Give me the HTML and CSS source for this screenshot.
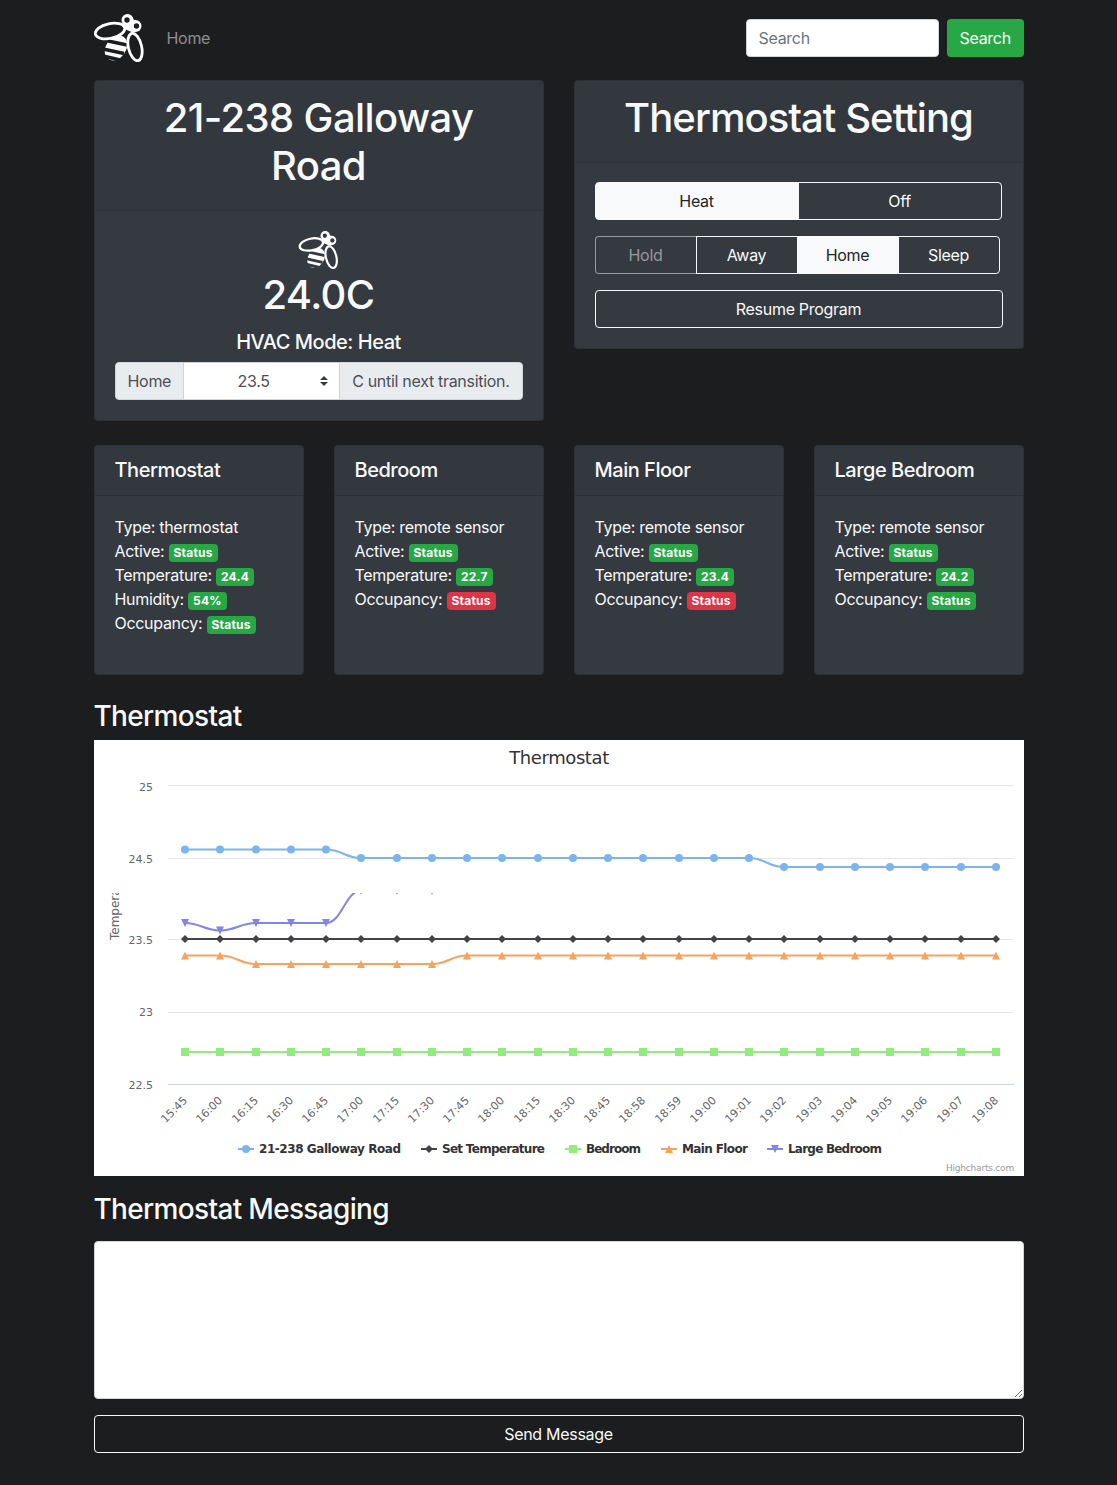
FILE: index.html
```html
<!DOCTYPE html>
<html lang="en">
<head>
    <meta charset="UTF-8">
    <meta name="viewport" content="width=device-width, initial-scale=1.0">
    <title>Thermostat</title>
    <link rel="stylesheet" href="styles.css">
</head>
<body>
    <!-- Bee logo, reused in the nav and the thermostat card -->
    <svg class="sprite" width="0" height="0">
        <symbol id="bee" viewBox="0 0 50 48">
            <circle cx="33.5" cy="6" r="6" fill="#fff"/>
            <circle cx="41.5" cy="12" r="6" fill="#fff"/>
            <path d="M33 2 L46 9 L40 19 L28 14 Z" fill="#fff"/>
            <circle cx="33" cy="6" r="2.7" fill="var(--bee-bg)"/>
            <circle cx="42.5" cy="12" r="2.7" fill="var(--bee-bg)"/>
            <ellipse cx="22" cy="34" rx="10" ry="13.5" transform="rotate(35 22 34)" fill="#fff"/>
            <path d="M14 27 L33 31 M9 35 L30 39.5 M9 42 L26 46" stroke="var(--bee-bg)" stroke-width="3.6" fill="none"/>
            <ellipse cx="16" cy="17" rx="15" ry="7.4" transform="rotate(-12 16 17)" fill="var(--bee-bg)" stroke="#fff" stroke-width="2.8"/>
            <ellipse cx="41" cy="33" rx="6.6" ry="14" transform="rotate(-13 41 33)" fill="var(--bee-bg)" stroke="#fff" stroke-width="2.8"/>
        </symbol>
    </svg>

    <div class="container">
        <nav class="navbar">
            <svg class="logo"><use href="#bee"/></svg>
            <a href="#" class="nav-link">Home</a>
            <form class="search-form">
                <input type="text" class="form-control search-input" placeholder="Search">
                <button type="button" class="btn btn-search">Search</button>
            </form>
        </nav>

        <div class="top-row">
            <section class="card">
                <div class="card-header">
                    <h1 class="address">21-238 Galloway<br>Road</h1>
                </div>
                <div class="card-body center">
                    <svg class="logo-small"><use href="#bee"/></svg>
                    <h1 class="current-temp">24.0C</h1>
                    <h5 class="hvac-mode">HVAC Mode: Heat</h5>
                    <div class="input-group">
                        <span class="input-text">Home</span>
                        <div class="select-wrap">
                            <select class="temp-select">
                                <option>23.5</option>
                                <option>24.0</option>
                            </select>
                            <span class="arrow-up"></span>
                            <span class="arrow-down"></span>
                        </div>
                        <span class="input-text input-text-end">C until next transition.</span>
                    </div>
                </div>
            </section>

            <section class="card card-short">
                <div class="card-header">
                    <h1>Thermostat Setting</h1>
                </div>
                <div class="card-body">
                    <div class="btn-group mode-group">
                        <button class="btn btn-outline active">Heat</button>
                        <button class="btn btn-outline">Off</button>
                    </div>
                    <div class="btn-group preset-group">
                        <button class="btn btn-outline disabled">Hold</button>
                        <button class="btn btn-outline">Away</button>
                        <button class="btn btn-outline active">Home</button>
                        <button class="btn btn-outline">Sleep</button>
                    </div>
                    <button class="btn btn-outline btn-block">Resume Program</button>
                </div>
            </section>
        </div>

        <div class="sensor-row">
            <section class="card sensor">
                <div class="card-header"><h5>Thermostat</h5></div>
                <div class="card-body">
                    <p>Type: thermostat</p>
                    <p>Active: <span class="badge">Status</span></p>
                    <p>Temperature: <span class="badge">24.4</span></p>
                    <p>Humidity: <span class="badge">54%</span></p>
                    <p>Occupancy: <span class="badge">Status</span></p>
                </div>
            </section>
            <section class="card sensor">
                <div class="card-header"><h5>Bedroom</h5></div>
                <div class="card-body">
                    <p>Type: remote sensor</p>
                    <p>Active: <span class="badge">Status</span></p>
                    <p>Temperature: <span class="badge">22.7</span></p>
                    <p>Occupancy: <span class="badge badge-danger">Status</span></p>
                </div>
            </section>
            <section class="card sensor">
                <div class="card-header"><h5>Main Floor</h5></div>
                <div class="card-body">
                    <p>Type: remote sensor</p>
                    <p>Active: <span class="badge">Status</span></p>
                    <p>Temperature: <span class="badge">23.4</span></p>
                    <p>Occupancy: <span class="badge badge-danger">Status</span></p>
                </div>
            </section>
            <section class="card sensor">
                <div class="card-header"><h5>Large Bedroom</h5></div>
                <div class="card-body">
                    <p>Type: remote sensor</p>
                    <p>Active: <span class="badge">Status</span></p>
                    <p>Temperature: <span class="badge">24.2</span></p>
                    <p>Occupancy: <span class="badge">Status</span></p>
                </div>
            </section>
        </div>

        <h3 class="chart-title">Thermostat</h3>
        <div id="chart" class="chart"></div>

        <h3 class="messaging-title">Thermostat Messaging</h3>
        <textarea class="form-control message-box" rows="6"></textarea>
        <button class="btn btn-outline btn-block btn-send">Send Message</button>
    </div>

    <script src="chart.js"></script>
</body>
</html>
```

FILE: styles.css
```css
* {
    box-sizing: border-box;
}

body {
    --bee-bg: #1b1d1f;
    margin: 0;
    background-color: #1b1d1f;
    color: #f8f9fa;
    font-family: Inter, "Liberation Sans", Arial, sans-serif;
    font-size: 16px;
    line-height: 24px;
    letter-spacing: -0.3px;
}

.sprite {
    position: absolute;
}

.container {
    max-width: 960px;
    margin: auto;
    padding: 0 15px 32px;
}

h1, h3, h5 {
    margin: 0;
    font-weight: 500;
    letter-spacing: -0.024em;
}

/* Navbar */
.navbar {
    display: flex;
    align-items: center;
    height: 76px;
    margin-bottom: 4px;
}

.logo {
    width: 50px;
    height: 48px;
}

.nav-link {
    margin-left: 23px;
    color: rgba(255, 255, 255, 0.5);
    text-decoration: none;
}

.search-form {
    display: flex;
    gap: 8px;
    margin-left: auto;
}

.search-input {
    width: 193px;
}

.form-control {
    display: block;
    padding: 6px 12px;
    background: white;
    border: 1px solid #ced4da;
    border-radius: 4px;
    color: #495057;
    font: inherit;
    letter-spacing: inherit;
}

.form-control::placeholder {
    color: #6c757d;
}

/* Buttons */
.btn {
    height: 38px;
    padding: 6px 12px;
    border: 1px solid transparent;
    border-radius: 4px;
    background: none;
    color: white;
    font: inherit;
    letter-spacing: inherit;
    cursor: pointer;
}

.btn-search {
    width: 77px;
    background-color: #28a745;
}

.btn-outline {
    border-color: #f8f9fa;
    color: #f8f9fa;
}

.btn-outline.active {
    background-color: #f8f9fa;
    color: #212529;
}

.btn-outline.disabled {
    color: rgba(248, 249, 250, 0.5);
    border-color: rgba(248, 249, 250, 0.5);
    border-right-color: #f8f9fa;
}

.btn-block {
    display: block;
    width: 100%;
}

.btn-group {
    display: flex;
    margin-bottom: 16px;
}

.btn-group .btn {
    flex: 1;
    border-radius: 0;
    margin-left: -1px;
}

.btn-group .btn:first-child {
    margin-left: 0;
    border-radius: 4px 0 0 4px;
}

.btn-group .btn:last-child {
    border-radius: 0 4px 4px 0;
}

.mode-group {
    width: 407px;
}

.preset-group {
    width: 405px;
}

/* Cards */
.card {
    --bee-bg: #343a40;
    background-color: #343a40;
    border: 1px solid rgba(0, 0, 0, 0.125);
    border-radius: 4px;
}

.card-header {
    padding: 13px 20px 12px;
    border-bottom: 1px solid rgba(0, 0, 0, 0.125);
    background-color: rgba(0, 0, 0, 0.03);
    text-align: center;
}

.card-header h1 {
    margin-bottom: 8px;
    font-size: 40px;
    line-height: 48px;
}

.card-header .address {
    letter-spacing: -0.6px;
}

.card-body {
    padding: 19px 20px 20px;
}

.center {
    text-align: center;
}

.top-row {
    display: grid;
    grid-template-columns: 1fr 1fr;
    gap: 30px;
    align-items: start;
}

.logo-small {
    display: block;
    width: 41px;
    height: 38px;
    margin: 1px auto 2px;
}

.current-temp {
    margin-bottom: 11px;
    font-size: 40px;
    line-height: 48px;
    letter-spacing: -0.6px;
}

.hvac-mode {
    margin-bottom: 8px;
    font-size: 20px;
    line-height: 24px;
}

/* Input group in the thermostat card */
.input-group {
    display: flex;
    height: 38px;
    color: #495057;
}

.input-text {
    padding: 6px 12px;
    background-color: #e9ecef;
    border: 1px solid #ced4da;
    border-radius: 4px 0 0 4px;
    white-space: nowrap;
}

.input-text-end {
    border-radius: 0 4px 4px 0;
    margin-left: -1px;
}

.select-wrap {
    position: relative;
    flex: 1;
    margin-left: -1px;
}

.temp-select {
    width: 100%;
    height: 38px;
    padding: 0 16px 0 0;
    appearance: none;
    background: white;
    border: 1px solid #ced4da;
    border-radius: 0;
    color: #495057;
    font: inherit;
    letter-spacing: inherit;
    text-align: center;
}

.arrow-up, .arrow-down {
    position: absolute;
    right: 12px;
    width: 0;
    height: 0;
    border-left: 4px solid transparent;
    border-right: 4px solid transparent;
}

.arrow-up {
    top: 14px;
    border-bottom: 4px solid #343a40;
}

.arrow-down {
    top: 20px;
    border-top: 4px solid #343a40;
}

/* Sensor cards */
.sensor-row {
    display: grid;
    grid-template-columns: repeat(4, 1fr);
    gap: 30px;
    margin-top: 24px;
}

.sensor {
    min-height: 230px;
}

.sensor .card-header {
    padding: 12px 20px 13px;
    text-align: left;
}

.sensor h5 {
    font-size: 20px;
    line-height: 24px;
}

.sensor p {
    margin: 0;
    white-space: nowrap;
}

.badge {
    display: inline-block;
    padding: 3px 5px;
    background-color: #28a745;
    border-radius: 4px;
    color: white;
    font-size: 12px;
    font-weight: 700;
    line-height: 12px;
    letter-spacing: 0.2px;
    vertical-align: baseline;
}

.badge-danger {
    background-color: #dc3545;
}

/* Chart */
.chart-title {
    margin-top: 24px;
    margin-bottom: 7px;
    font-size: 28px;
    line-height: 34px;
}

.chart {
    height: 436px;
    background: white;
    letter-spacing: 0;
}

.chart svg {
    display: block;
    width: 100%;
    height: 100%;
}

.chart text {
    font-family: "DejaVu Sans", Verdana, sans-serif;
}

.chart .chart-name {
    letter-spacing: -0.4px;
}

.chart .credits {
    letter-spacing: -0.2px;
}

.messaging-title {
    margin-top: 16px;
    margin-bottom: 15px;
    font-size: 28px;
    line-height: 34px;
}

.message-box {
    width: 100%;
    height: 158px;
    margin-bottom: 16px;
}
```

FILE: chart.js
```js
// Hand-rolled version of the temperature chart, coordinates relative to the chart box
const categories = ['15:45', '16:00', '16:15', '16:30', '16:45', '17:00', '17:15', '17:30', '17:45',
    '18:00', '18:15', '18:30', '18:45', '18:58', '18:59', '19:00', '19:01', '19:02', '19:03',
    '19:04', '19:05', '19:06', '19:07', '19:08'];

const pointX = categories.map((c, i) => Math.round(91 + 35.26 * i));

function fill(first, rest) {
    return categories.map((c, i) => {
        for (const [until, y] of rest) {
            if (i <= until) return y;
        }
        return first;
    });
}

const series = [
    { name: '21-238 Galloway Road', color: '#7cb5ec', symbol: 'circle', legendX: 144, labelWidth: 142, ys: fill(127, [[4, 109.5], [16, 118]]) },
    { name: 'Set Temperature', color: '#434348', symbol: 'diamond', legendX: 327, labelWidth: 103, ys: fill(199, []) },
    { name: 'Bedroom', color: '#90ed7d', symbol: 'square', legendX: 471, labelWidth: 55, ys: fill(312, []) },
    { name: 'Main Floor', color: '#f7a35c', symbol: 'triangle', legendX: 567, labelWidth: 66, ys: fill(215.5, [[1, 215.5], [7, 224]]) },
    { name: 'Large Bedroom', color: '#8085e9', symbol: 'triangle-down', legendX: 673, labelWidth: 94, ys: [183, 190.5, 183, 183, 183, 150.8, 150.8, 150.8], clip: true }
];

function marker(symbol, x, y, color) {
    if (symbol === 'circle') return `<circle cx="${x}" cy="${y}" r="4" fill="${color}"/>`;
    if (symbol === 'square') return `<rect x="${x - 4}" y="${y - 4}" width="8" height="8" fill="${color}"/>`;
    let points = '';
    if (symbol === 'diamond') points = `${x},${y - 4} ${x + 4},${y} ${x},${y + 4} ${x - 4},${y}`;
    if (symbol === 'triangle') points = `${x},${y - 4} ${x + 4},${y + 4} ${x - 4},${y + 4}`;
    if (symbol === 'triangle-down') points = `${x - 4},${y - 4} ${x + 4},${y - 4} ${x},${y + 4}`;
    return `<polygon points="${points}" fill="${color}"/>`;
}

function linePath(ys) {
    let d = `M${pointX[0]} ${ys[0]}`;
    for (let i = 1; i < ys.length; i++) {
        const x0 = pointX[i - 1];
        const x1 = pointX[i];
        const bend = (x1 - x0) * 0.45;
        d += ` C${x0 + bend} ${ys[i - 1]} ${x1 - bend} ${ys[i]} ${x1} ${ys[i]}`;
    }
    return d;
}

let svg = '<svg viewBox="0 0 930 436" xmlns="http://www.w3.org/2000/svg">';
svg += '<defs><clipPath id="plot-cut"><rect x="0" y="153" width="930" height="283"/></clipPath></defs>';

svg += '<text x="465" y="24" text-anchor="middle" font-size="18" fill="#333" class="chart-name">Thermostat</text>';

// Grid lines and y labels
[[45.5, 51, '25'], [118.5, 123, '24.5'], [199.5, 204, '23.5'], [272.5, 276, '23']].forEach(([y, base, label]) => {
    svg += `<line x1="74" x2="920" y1="${y}" y2="${y}" stroke="#e6e6e6"/>`;
    svg += `<text x="59" y="${base}" text-anchor="end" font-size="11" fill="#666">${label}</text>`;
});
svg += '<line x1="74" x2="920" y1="344.5" y2="344.5" stroke="#ccd6eb"/>';
svg += '<text x="59" y="349" text-anchor="end" font-size="11" fill="#666">22.5</text>';

svg += '<g clip-path="url(#plot-cut)"><text transform="translate(25 200) rotate(-90)" font-size="12" fill="#666">Temperature</text></g>';

// X labels
categories.forEach((label, i) => {
    svg += `<text transform="translate(${pointX[i] + 3} 361) rotate(-45)" text-anchor="end" font-size="11" fill="#666">${label}</text>`;
});

// Series
series.forEach((s) => {
    let group = `<path d="${linePath(s.ys)}" fill="none" stroke="${s.color}" stroke-width="2"/>`;
    s.ys.forEach((y, i) => {
        group += marker(s.symbol, pointX[i], y, s.color);
    });
    svg += s.clip ? `<g clip-path="url(#plot-cut)">${group}</g>` : group;
});

// Legend
series.forEach((s) => {
    svg += `<line x1="${s.legendX}" x2="${s.legendX + 16}" y1="409" y2="409" stroke="${s.color}" stroke-width="2"/>`;
    svg += marker(s.symbol, s.legendX + 8, 409, s.color);
    svg += `<text x="${s.legendX + 21}" y="413" font-size="12" font-weight="700" fill="#333" textLength="${s.labelWidth}">${s.name}</text>`;
});

svg += '<text x="920" y="431" text-anchor="end" font-size="9" fill="#999" class="credits">Highcharts.com</text>';
svg += '</svg>';

document.getElementById('chart').innerHTML = svg;
```
